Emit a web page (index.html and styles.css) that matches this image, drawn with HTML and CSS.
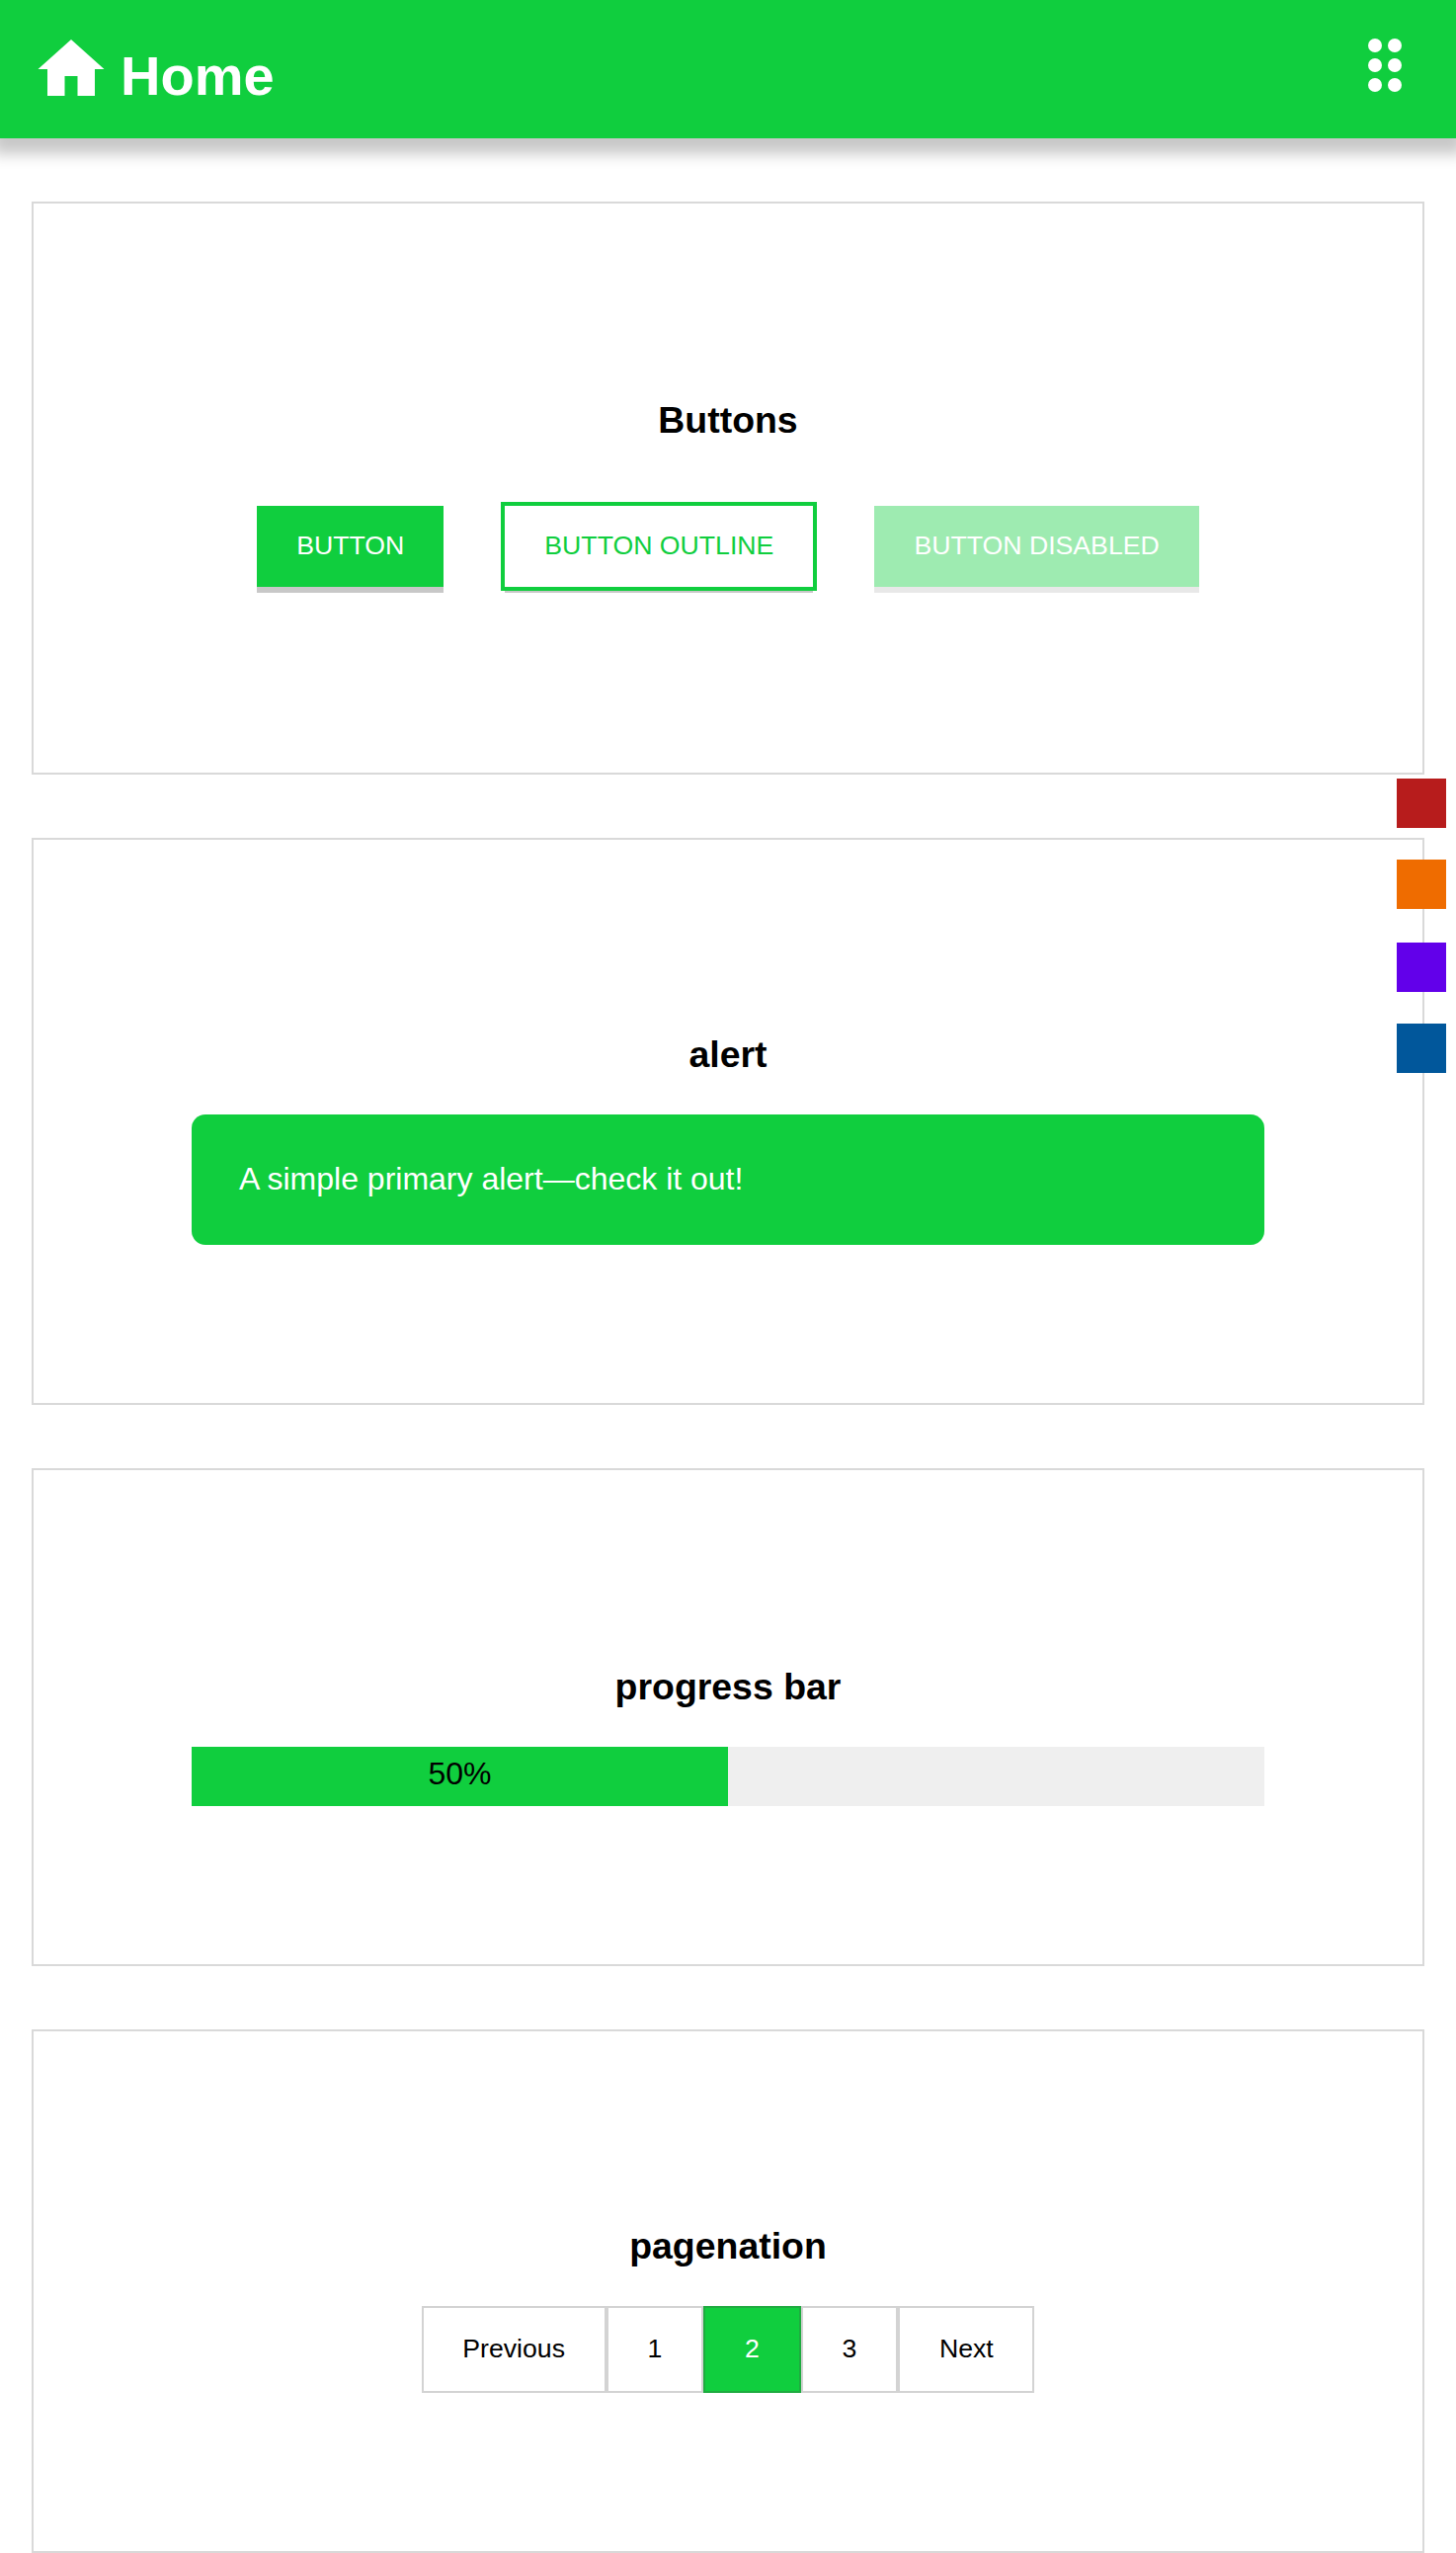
FILE: index.html
```html
<!DOCTYPE html>
<html lang="en">
<head>
<meta charset="utf-8">
<title>Home</title>
<link rel="stylesheet" href="styles.css">
</head>
<body>
<header class="header">
  <a class="brand">
    <svg class="home-icon" width="68" height="58" viewBox="0 0 68 58"><path fill="#fff" d="M34 0 67.500 30H58V57H40.500V37H27.500V57H10V30H.5Z"/></svg>
    <h1 class="brand-title">Home</h1>
  </a>
  <svg class="menu-icon" width="34" height="54" viewBox="0 0 34 54" fill="#fff"><circle cx="7" cy="7" r="7"/><circle cx="27" cy="7" r="7"/><circle cx="7" cy="27" r="7"/><circle cx="27" cy="27" r="7"/><circle cx="7" cy="47" r="7"/><circle cx="27" cy="47" r="7"/></svg>
</header>
<main class="main">
  <section class="card card-buttons">
    <h3 class="card-title">Buttons</h3>
    <div class="buttons">
      <button class="btn">BUTTON</button>
      <button class="btn btn-outline">BUTTON OUTLINE</button>
      <button class="btn btn-disabled">BUTTON DISABLED</button>
    </div>
  </section>
  <section class="card card-alert">
    <h3 class="card-title">alert</h3>
    <div class="alert">A simple primary alert—check it out!</div>
  </section>
  <section class="card card-progress">
    <h3 class="card-title">progress bar</h3>
    <div class="progress"><div class="progress-bar" style="width: 50%">50%</div></div>
  </section>
  <section class="card card-pagination">
    <h3 class="card-title">pagenation</h3>
    <nav class="pagination">
      <a class="page">Previous</a><a class="page">1</a><a class="page page-active">2</a><a class="page">3</a><a class="page">Next</a>
    </nav>
  </section>
</main>
<aside class="themes">
  <span class="swatch swatch-red"></span>
  <span class="swatch swatch-orange"></span>
  <span class="swatch swatch-purple"></span>
  <span class="swatch swatch-blue"></span>
</aside>
</body>
</html>
```
FILE: styles.css
```css
:root {
  --primary: #10ce3e;
  --shadow: #c8c8c8;
}

* {
  box-sizing: border-box;
  margin: 0;
  padding: 0;
}

body {
  position: relative;
  background: #fff;
  color: #000;
  font: 32px "Liberation Sans", Arial, sans-serif;
}

.header {
  display: flex;
  justify-content: space-between;
  align-items: flex-start;
  height: 140px;
  padding: 39px 55px 0 38px;
  background: var(--primary);
  box-shadow: 0 8px 14px 8px var(--shadow);
}

.brand {
  display: flex;
  gap: 16px;
  color: #fff;
}

.home-icon {
  margin-top: 1px;
}

.brand-title {
  padding-top: 6px;
  font-size: 56px;
  line-height: 64px;
}

.main {
  display: flex;
  flex-direction: column;
  gap: 64px;
  padding: 64px 32px 0;
}

.card {
  padding: 198px 160px 0;
  border: 2px solid #d9d9d9;
}

.card-buttons { height: 580px; }
.card-alert { height: 574px; padding-top: 196px; }
.card-progress { height: 504px; padding-top: 198px; }
.card-pagination { height: 530px; padding-top: 196px; }

.card-title {
  height: 44px;
  font-size: 37.44px;
  line-height: 42px;
  text-align: center;
}

.buttons {
  display: flex;
  justify-content: center;
  gap: 62px;
  margin-top: 64px;
}

.btn {
  height: 82px;
  padding: 0 40px 2px;
  border: 0;
  background: var(--primary);
  box-shadow: 0 6px var(--shadow);
  color: #fff;
  font: 26.667px "Liberation Sans", Arial, sans-serif;
}

.btn-outline {
  outline: 4px solid var(--primary);
  background: #fff;
  color: var(--primary);
}

.btn-disabled {
  opacity: .4;
}

.alert {
  height: 132px;
  margin-top: 38px;
  padding: 0 48px;
  border-radius: 14px;
  background: var(--primary);
  color: #fff;
  line-height: 130px;
}

.progress {
  height: 60px;
  margin-top: 38px;
  background: #efefef;
}

.progress-bar {
  height: 60px;
  background: var(--primary);
  line-height: 54px;
  text-align: center;
}

.pagination {
  display: flex;
  justify-content: center;
  margin-top: 38px;
}

.page {
  height: 88px;
  padding: 0 39.800px;
  border: 2px solid #d3d3d3;
  font-size: 26.667px;
  line-height: 82px;
}

.page-active {
  border-color: #1fab40;
  background: var(--primary);
  color: #fff;
}

.themes {
  position: absolute;
  top: 788px;
  right: 10px;
  display: flex;
  flex-direction: column;
  gap: 32px;
}

.swatch {
  width: 50px;
  height: 50px;
}

.swatch-red { background: #b71c1c; }
.swatch-orange { background: #ef6c00; }
.swatch-purple { margin-top: 2px; background: #6200ea; }
.swatch-blue { background: #01579b; }
```
